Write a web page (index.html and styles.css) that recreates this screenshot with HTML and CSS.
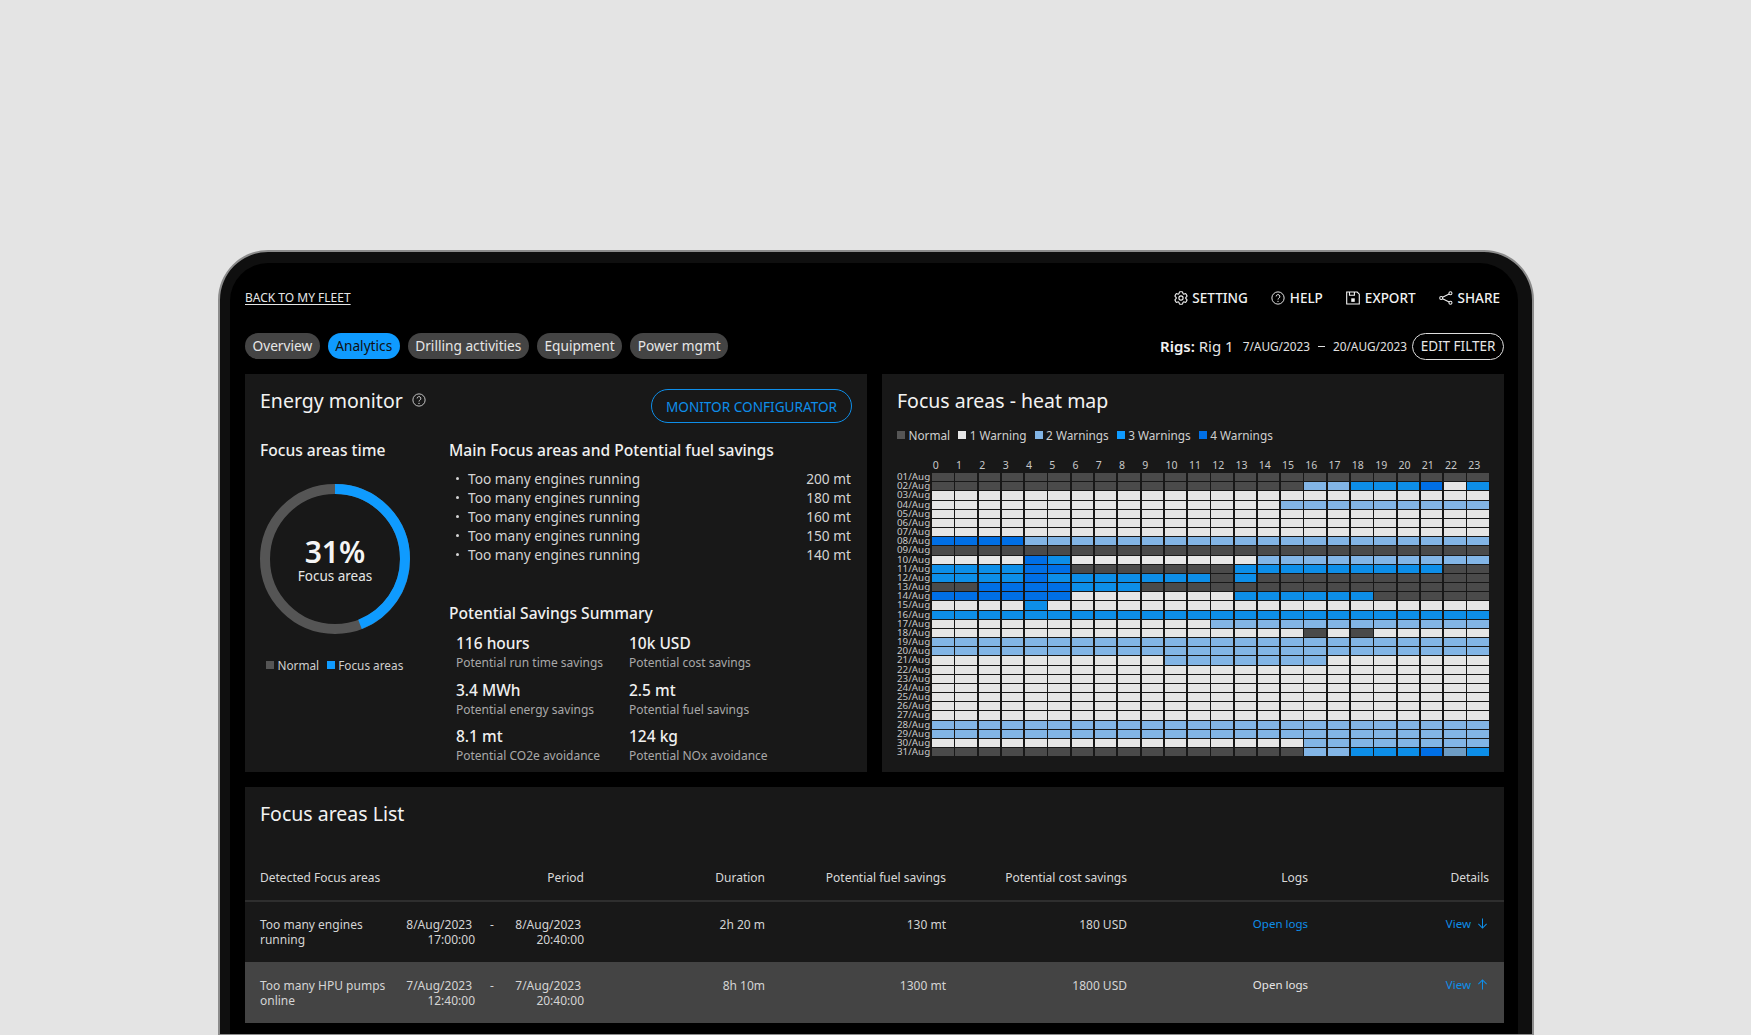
FILE: index.html
```html
<!DOCTYPE html>
<html lang="en">
<head>
<meta charset="utf-8">
<title>Energy monitor</title>
<link rel="stylesheet" href="styles.css">
</head>
<body>
<div class="frame">
  <div class="screen">
    <header class="topbar">
      <a class="back">BACK TO MY FLEET</a>
      <nav class="actions">
        <span class="action"><svg class="ico" viewBox="2 2 20 20"><path d="M9.594 3.94c.09-.542.56-.94 1.11-.94h2.593c.55 0 1.02.398 1.11.94l.213 1.281c.063.374.313.686.645.87.074.04.147.083.22.127.325.196.72.257 1.075.124l1.217-.456a1.125 1.125 0 0 1 1.37.49l1.296 2.247a1.125 1.125 0 0 1-.26 1.431l-1.003.827c-.293.241-.438.613-.43.992a7.723 7.723 0 0 1 0 .255c-.008.378.137.75.43.991l1.004.827c.424.35.534.955.26 1.43l-1.298 2.247a1.125 1.125 0 0 1-1.369.491l-1.217-.456c-.355-.133-.75-.072-1.076.124a6.47 6.47 0 0 1-.22.128c-.331.183-.581.495-.644.869l-.213 1.281c-.09.543-.56.94-1.11.94h-2.594c-.55 0-1.019-.398-1.11-.94l-.213-1.281c-.062-.374-.312-.686-.644-.87a6.52 6.52 0 0 1-.22-.127c-.325-.196-.72-.257-1.076-.124l-1.217.456a1.125 1.125 0 0 1-1.369-.49l-1.297-2.247a1.125 1.125 0 0 1 .26-1.431l1.004-.827c.292-.24.437-.613.43-.991a6.932 6.932 0 0 1 0-.255c.007-.38-.138-.751-.43-.992l-1.004-.827a1.125 1.125 0 0 1-.26-1.43l1.297-2.247a1.125 1.125 0 0 1 1.37-.491l1.216.456c.356.133.751.072 1.076-.124.072-.044.146-.086.22-.128.332-.183.582-.495.644-.869l.214-1.28Z"/><circle cx="12" cy="12" r="3"/></svg>SETTING</span>
        <span class="action"><svg class="ico" viewBox="0 0 24 24"><circle cx="12" cy="12" r="10.500"/><path d="M8.800 9.300a3.200 3.200 0 1 1 4.700 2.900c-1 .6-1.500 1.200-1.500 2.500"/><circle class="dot" cx="12" cy="17.600" r="1.100"/></svg>HELP</span>
        <span class="action"><svg class="ico" viewBox="2 2 20 20"><path d="M3 3.500h15l3 3v14H3z"/><path d="M7 3.500v4.500h7V3.500"/><rect class="dot" x="9.500" y="12.500" width="5" height="5"/></svg>EXPORT</span>
        <span class="action"><svg class="ico" viewBox="1 1 22 22"><circle cx="19" cy="4.500" r="2.400"/><circle cx="19" cy="19.500" r="2.400"/><circle cx="4.500" cy="12" r="2.400"/><path d="M17 5.700 6.600 10.800M17 18.300 6.600 13.200"/></svg>SHARE</span>
      </nav>
    </header>

    <div class="filterbar">
      <div class="tabs">
        <span class="tab">Overview</span>
        <span class="tab tab-active">Analytics</span>
        <span class="tab">Drilling activities</span>
        <span class="tab">Equipment</span>
        <span class="tab">Power mgmt</span>
      </div>
      <div class="filters">
        <span class="rig"><b>Rigs:</b> Rig 1</span>
        <span class="dates">7/AUG/2023</span>
        <span class="dash"></span>
        <span class="dates">20/AUG/2023</span>
        <button class="edit">EDIT FILTER</button>
      </div>
    </div>

    <div class="panels">
      <section class="panel energy">
        <div class="energy-head">
          <h2 class="title">Energy monitor<svg class="help" viewBox="0 0 24 24"><circle cx="12" cy="12" r="10.500"/><path d="M8.800 9.300a3.200 3.200 0 1 1 4.700 2.900c-1 .6-1.500 1.200-1.500 2.500"/><circle class="dot" cx="12" cy="17.600" r="1.100"/></svg></h2>
          <button class="configure">MONITOR CONFIGURATOR</button>
        </div>
        <div class="energy-body">
          <div class="time">
            <h3 class="sub">Focus areas time</h3>
            <div class="gauge">
              <svg class="gauge-svg" viewBox="0 0 150 150">
                <circle class="ring" cx="75" cy="75" r="70"/>
                <circle class="ring-on" cx="75" cy="75" r="70"/>
              </svg>
              <div class="gauge-text">
                <strong class="pct">31%</strong>
                <span class="pct-label">Focus areas</span>
              </div>
            </div>
            <div class="legend gauge-legend">
              <span class="key"><i class="sq n"></i>Normal</span>
              <span class="key"><i class="sq active"></i>Focus areas</span>
            </div>
          </div>
          <div class="savings">
            <h3 class="sub">Main Focus areas and Potential fuel savings</h3>
            <ul class="areas">
              <li><span>Too many engines running</span><span>200 mt</span></li>
              <li><span>Too many engines running</span><span>180 mt</span></li>
              <li><span>Too many engines running</span><span>160 mt</span></li>
              <li><span>Too many engines running</span><span>150 mt</span></li>
              <li><span>Too many engines running</span><span>140 mt</span></li>
            </ul>
            <h3 class="sub summary-title">Potential Savings Summary</h3>
            <div class="summary">
              <div><div class="val">116 hours</div><div class="cap">Potential run time savings</div></div>
              <div><div class="val">10k USD</div><div class="cap">Potential cost savings</div></div>
              <div><div class="val">3.4 MWh</div><div class="cap">Potential energy savings</div></div>
              <div><div class="val">2.5 mt</div><div class="cap">Potential fuel savings</div></div>
              <div><div class="val">8.1 mt</div><div class="cap">Potential CO2e avoidance</div></div>
              <div><div class="val">124 kg</div><div class="cap">Potential NOx avoidance</div></div>
            </div>
          </div>
        </div>
      </section>

      <section class="panel heat">
        <h2 class="title">Focus areas - heat map</h2>
        <div class="legend heat-legend">
          <span class="key"><i class="sq n"></i>Normal</span>
          <span class="key"><i class="sq w"></i>1 Warning</span>
          <span class="key"><i class="sq l"></i>2 Warnings</span>
          <span class="key"><i class="sq b"></i>3 Warnings</span>
          <span class="key"><i class="sq d"></i>4 Warnings</span>
        </div>
        <div class="heatgrid" id="heatgrid"></div>
      </section>
    </div>

    <section class="panel list">
      <h2 class="title list-title">Focus areas List</h2>
      <div class="row row-head">
        <div class="lead">Detected Focus areas</div>
        <div>Period</div>
        <div>Duration</div>
        <div>Potential fuel savings</div>
        <div>Potential cost savings</div>
        <div>Logs</div>
        <div>Details</div>
      </div>
      <div class="row row-body">
        <div class="first">
          <div class="name">Too many engines running</div>
          <div class="stamp"><span class="day">8/Aug/2023</span><span>17:00:00</span></div>
          <div class="sep">-</div>
          <div class="stamp"><span class="day">8/Aug/2023</span><span>20:40:00</span></div>
        </div>
        <div>2h 20 m</div>
        <div>130 mt</div>
        <div>180 USD</div>
        <div class="logs link">Open logs</div>
        <div class="logs link view">View<svg class="arrow" viewBox="0 0 12 12"><path d="M6 .5v10.500M1.500 6.500 6 11l4.500-4.500"/></svg></div>
      </div>
      <div class="row row-body row-open">
        <div class="first">
          <div class="name">Too many HPU pumps online</div>
          <div class="stamp"><span class="day">7/Aug/2023</span><span>12:40:00</span></div>
          <div class="sep">-</div>
          <div class="stamp"><span class="day">7/Aug/2023</span><span>20:40:00</span></div>
        </div>
        <div>8h 10m</div>
        <div>1300 mt</div>
        <div>1800 USD</div>
        <div class="logs logs-plain">Open logs</div>
        <div class="logs link view">View<svg class="arrow" viewBox="0 0 12 12"><path d="M6 11.500V1M1.500 5.500 6 1l4.500 4.500"/></svg></div>
      </div>
    </section>
  </div>
</div>
<script src="script.js"></script>
</body>
</html>
```

FILE: styles.css
```css
* { box-sizing: border-box; }
html, body { margin: 0; height: 1035px; overflow: hidden; }
body {
  background: #e4e4e4;
  color: #fff;
  font-family: "Noto Sans", "Open Sans", sans-serif;
  padding: 250px 0 0 218px;
}
h2, h3, ul { margin: 0; padding: 0; }
button { font-family: inherit; background: none; padding: 0; cursor: pointer; }

.frame {
  width: 1316px;
  height: 785px;
  padding: 11px 14px 0 10px;
  background: #0f0f0f;
  border: 2px solid #8c8c8c;
  border-bottom-width: 1px;
  border-radius: 50px 50px 0 0;
}
.screen {
  height: 100%;
  padding: 25px 14px 0 15px;
  background: #000;
  border-radius: 38px 38px 0 0;
}

.topbar { display: flex; justify-content: space-between; align-items: center; height: 20px; }
.back { font-size: 12px; color: #e6e6e6; text-decoration: underline; text-underline-offset: 2px; line-height: 20px; padding-bottom: 1px; }
.actions { display: flex; gap: 23.500px; padding-right: 4px; }
.action { display: flex; align-items: center; gap: 4.500px; font-size: 13.500px; font-weight: 500; color: #f2f2f2; line-height: 20px; }
.ico { width: 14px; height: 14px; fill: none; stroke: #f2f2f2; stroke-width: 1.600; }
.dot { fill: #f2f2f2; stroke: none; }

.filterbar { display: flex; justify-content: space-between; align-items: center; margin-top: 25px; height: 26px; }
.tabs { display: flex; gap: 8px; }
.tab { height: 26px; padding: 0 7.500px; border-radius: 13px; background: #444; color: #e6e6e6; font-size: 13.700px; line-height: 25px; }
.tab-active { background: #0f9bff; color: #111; }
.filters { display: flex; align-items: center; }
.rig { font-size: 15px; color: #e6e6e6; margin-right: 9px; }
.rig b { font-weight: 600; color: #f2f2f2; }
.dates { font-size: 11.800px; color: #e0e0e0; }
.dash { width: 7px; height: 1px; background: #e0e0e0; margin: 0 8px; }
.edit { margin-left: 5px; width: 92px; height: 27px; border: 1px solid #dedede; border-radius: 14px; color: #e6e6e6; font-size: 13.500px; }

.panels { display: grid; grid-template-columns: 622px 622px; gap: 15px; margin-top: 15px; }
.panel { background: #181818; }
.energy, .heat { height: 398px; padding: 15px; }
.title { font-size: 19.500px; font-weight: 400; line-height: 24px; color: #f2f2f2; }

.energy-head { display: flex; justify-content: space-between; align-items: flex-start; }
.energy-head .title { display: flex; align-items: center; gap: 9px; }
.help { width: 14px; height: 14px; fill: none; stroke: #d8d8d8; stroke-width: 1.500; margin-top: -2px; }
.configure { width: 201px; height: 34px; border: 1px solid #0e8ee9; border-radius: 17px; color: #0e8ee9; font-size: 13.600px; }
.energy-body { display: flex; margin-top: 17px; }
.time { width: 189px; }
.savings { flex: 1; }
.sub { font-size: 15.600px; font-weight: 500; line-height: 20px; color: #f0f0f0; }

.gauge { display: grid; width: 150px; height: 150px; margin-top: 24px; }
.gauge-svg, .gauge-text { grid-area: 1 / 1; }
.gauge-svg { width: 150px; height: 150px; transform: rotate(-90deg); }
.ring, .ring-on { fill: none; stroke-width: 10; }
.ring { stroke: #555; }
.ring-on { stroke: #0f9bff; stroke-dasharray: 194 440; }
.gauge-text { display: flex; flex-direction: column; align-items: center; padding-top: 48px; }
.pct { font-size: 30px; font-weight: 600; line-height: 40px; color: #f5f5f5; }
.pct-label { font-size: 13.500px; line-height: 20px; margin-top: -6px; color: #e6e6e6; }

.legend { display: flex; font-size: 11.800px; line-height: 18px; color: #cfcfcf; }
.key { display: flex; align-items: center; gap: 3.500px; }
.sq { width: 8px; height: 8px; }
.sq.n { background: #555; }
.sq.active { background: #0f9bff; }
.sq.w { background: #e6e6e6; }
.sq.l { background: #82b5e6; }
.sq.b { background: #0f9bff; }
.sq.d { background: #006fe6; }
.gauge-legend { gap: 7.500px; margin: 22px 0 0 6px; }

.areas { list-style: none; margin-top: 9px; padding-left: 7px; }
.areas li { display: flex; justify-content: space-between; height: 19px; line-height: 19px; font-size: 13.700px; color: #d4d4d4; padding-right: 1px; }
.areas li span:first-child { display: flex; align-items: center; }
.areas li span:first-child::before { content: ""; width: 3px; height: 3px; border-radius: 50%; background: #d4d4d4; margin-right: 9px; }
.summary-title { margin-top: 39px; }
.summary { display: grid; grid-template-columns: 173px 1fr; row-gap: 7.500px; margin-top: 10px; padding-left: 7px; }
.val { font-size: 15.500px; font-weight: 500; line-height: 21px; color: #f0f0f0; }
.cap { font-size: 12px; line-height: 18px; color: #a8a8a8; }

.heat-legend { gap: 8px; margin-top: 13px; }
.heatgrid {
  display: grid;
  grid-template-columns: 33.240px repeat(24, 1fr);
  grid-template-rows: 14px repeat(31, 8.180px);
  column-gap: 1.760px;
  row-gap: 1px;
  margin-top: 14px;
  width: 592px;
}
.hour { font-size: 10.500px; line-height: 14px; padding-left: .8px; color: #c8c8c8; }
.day-label { font-size: 9.800px; line-height: 8px; text-align: right; padding-right: 1px; color: #c8c8c8; white-space: nowrap; }
.c-n { background: #4a4a4a; }
.c-w { background: #e6e6e6; }
.c-l { background: #82b5e6; }
.c-b { background: #0d8ee8; }
.c-d { background: #006fe6; }
.c-x { background: #6d9cc4; }

.list { margin-top: 15px; height: 236px; padding-top: 15px; }
.list-title { padding-left: 15px; }
.row {
  display: grid;
  grid-template-columns: 324px repeat(5, 181px);
  padding: 0 15px;
  font-size: 12px;
  line-height: 15px;
  color: #d4d4d4;
  text-align: right;
}
.row-head { margin-top: 42px; line-height: 20px; padding-bottom: 12px; border-bottom: 2px solid #2e2e2e; color: #d8d8d8; grid-template-columns: 162px 162px repeat(5, 181px); }
.lead { text-align: left; }
.row-body { height: 60px; padding-top: 14.500px; }
.row-open { height: 61px; padding-top: 15.500px; background: #444; }
.first { display: grid; grid-template-columns: 146px 69px 34px 75px; }
.name { text-align: left; padding-right: 8px; }
.stamp { display: flex; flex-direction: column; align-items: flex-end; }
.day { padding-right: 3px; }
.sep { text-align: center; }
.logs { font-size: 11.500px; margin-top: -1px; }
.link { color: #0e8ee9; }
.logs-plain { color: #e6e6e6; }
.view { display: flex; justify-content: flex-end; align-items: flex-start; gap: 6px; padding-right: 1px; }
.arrow { width: 11px; height: 11px; margin-top: 2px; fill: none; stroke: #0e8ee9; stroke-width: 1.100; }
```

FILE: script.js
```js
var rows = [
  "nnnnnnnnnnnnnnnnnnnnnnnn",
  "nnnnnnnnnnnnnnnnllbbbdwb",
  "wwwwwwwwwwwwwwwwwwwwwwww",
  "wwwwwwwwwwwwwwwlllllllll",
  "wwwwwwwwwwwwwwwwwwwwwwww",
  "wwwwwwwwwwwwwwwwwwwwwwww",
  "wwwwwwwwwwwwwwwwwwwwwwww",
  "ddddllllllllllllllllllll",
  "nnnnnnnnnnnnnnnnnnnnnnnn",
  "wwwwdbwwwwwwwwllllllllll",
  "bbbbddnnnnnnnbbbbbbbbbnn",
  "bbbbdbbbbbbbnbnnnnnnnnnn",
  "nnddddbbbnnnnnnnnnnnnnnn",
  "ddddddwwwwwwwbbbbbbnnnnn",
  "wwwwbwwwwwwwwwwwwwwwwwww",
  "bbbbbbbbbbbbbbbbbbbbbbbb",
  "wwwwwwwwwwwwllllllllllll",
  "wwwwwwwwwwwwwwwwnwnwwwww",
  "llllllllllllllllllllllll",
  "llllllllllllllllllllllll",
  "wwwwwwwwwwlllllllwwwwwww",
  "wwwwwwwwwwwwwwwwwwwwwwww",
  "wwwwwwwwwwwwwwwwwwwwwwww",
  "wwwwwwwwwwwwwwwwwwwwwwww",
  "wwwwwwwwwwwwwwwwwwwwwwww",
  "wwwwwwwwwwwwwwwwwwwwwwww",
  "wwwwwwwwwwwwwwwwwwwwwwww",
  "llllllllllllllllllllllll",
  "llllllllllllllllllllllll",
  "wwwwwwwwwwwwwwwwllllllll",
  "nnnnnnnnnnnnnnnnllbbbdxb"
];
var grid = document.getElementById("heatgrid");
function add(cls, text) {
  var el = document.createElement("div");
  el.className = cls;
  if (text !== undefined) el.textContent = text;
  grid.appendChild(el);
}
add("hour-spacer");
for (var h = 0; h < 24; h++) add("hour", String(h));
rows.forEach(function (row, i) {
  var d = i + 1;
  add("day-label", (d < 10 ? "0" : "") + d + "/Aug");
  row.split("").forEach(function (c) { add("c-" + c); });
});
```
